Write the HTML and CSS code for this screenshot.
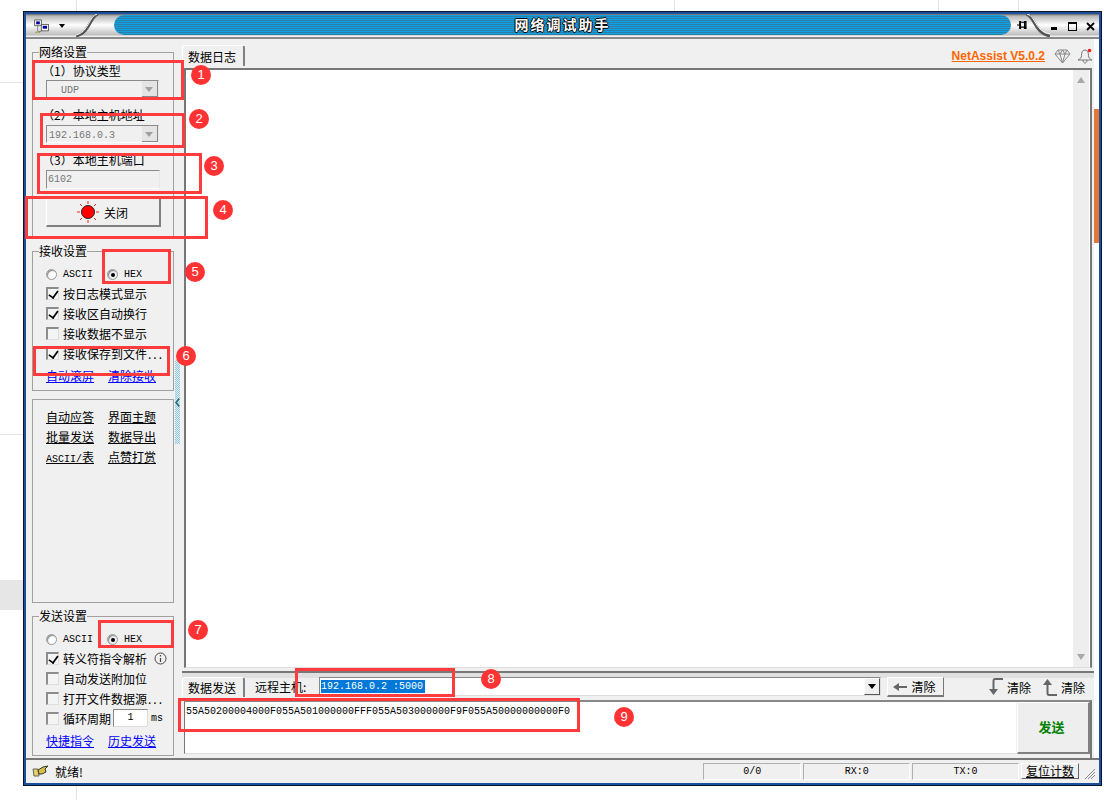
FILE: index.html
```html
<!DOCTYPE html>
<html lang="zh-CN">
<head>
  <meta charset="UTF-8" />
  <title>网络调试助手</title>
  <link rel="stylesheet" href="styles.css">
</head>
<body>
<div class="page">

  <div class="stray stray-h1"></div>
  <div class="stray stray-h2"></div>
  <div class="stray stray-box"></div>
  <div class="stray stray-v1"></div>
  <div class="stray stray-v2"></div>
  <div class="stray stray-v3"></div>
  <div class="stray stray-v4"></div>
  <div class="stray stray-v5"></div>

  <div class="window">

    <div class="titlebar">
      <div class="sys-menu">
        <svg width="16" height="15" viewBox="0 0 22 20">
          <rect x="1" y="1" width="9" height="8" fill="#fff" stroke="#333"/>
          <rect x="3" y="3" width="5" height="4" fill="#0000a0"/>
          <rect x="10" y="7" width="10" height="9" fill="#fff" stroke="#333"/>
          <rect x="12" y="9" width="6" height="4" fill="#0000a0"/>
          <path d="M5 9v8h5M2 18h6" fill="none" stroke="#666"/>
          <path d="M4 17h2v2h-2z" fill="#e8d000"/>
        </svg>
        <span class="caret"></span>
      </div>
      <svg class="swoosh" width="24" height="23" viewBox="0 0 24 23">
        <path d="M22 0C14 2 14 19 0 22" fill="none" stroke="#555" stroke-width="3"/>
        <path d="M21 0C13 2 13 18 0 21" fill="none" stroke="#fff" stroke-width="1"/>
      </svg>
      <div class="title-strip"><span class="title-text">网络调试助手</span></div>
      <svg class="pin" width="11" height="10" viewBox="0 0 16 14">
        <path d="M0 7h4M4 2h1v10h-1zM5 3h8M5 10h8M11 2h2v10h-2z" fill="none" stroke="#000" stroke-width="1.800"/>
      </svg>
      <svg class="swoosh swoosh-right" width="24" height="23" viewBox="0 0 24 23">
        <path d="M0 0C9 2 8 19 24 22" fill="none" stroke="#555" stroke-width="3"/>
        <path d="M1 0C10 2 9 18 24 20" fill="none" stroke="#fff" stroke-width="1"/>
      </svg>
      <div class="win-buttons">
        <span class="win-min"></span>
        <span class="win-max"></span>
        <svg width="9" height="9" viewBox="0 0 9 9"><path d="M1 1l7 7M8 1l-7 7" stroke="#000" stroke-width="1.800"/></svg>
      </div>
    </div>

    <div class="body">

      <div class="side">
        <fieldset class="group group-net">
          <legend>网络设置</legend>
          <div class="field-label">（1）协议类型</div>
          <div class="combo combo-disabled combo-udp">
            <span class="combo-text">UDP</span>
            <span class="combo-arrow"></span>
          </div>
          <div class="field-label field-gap">（2）本地主机地址</div>
          <div class="combo combo-disabled combo-low">
            <span class="combo-text">192.168.0.3</span>
            <span class="combo-arrow"></span>
          </div>
          <div class="field-label field-gap">（3）本地主机端口</div>
          <div class="port-input mono">6102</div>
          <div class="open-btn">
            <svg width="24" height="24" viewBox="0 0 24 24">
              <circle cx="12" cy="12" r="6.500" fill="#f00" stroke="#222" stroke-width="1"/>
              <path d="M12 1v3M12 20v3M1 12h3M20 12h3M4 4l2 2M18 18l2 2M20 4l-2 2M4 20l2-2" stroke="#f02020" stroke-width="1"/>
            </svg>
            <span>关闭</span>
          </div>
        </fieldset>

        <fieldset class="group group-recv">
          <legend>接收设置</legend>
          <div class="radio-row">
            <span class="radio"></span><span class="mono radio-text">ASCII</span>
            <span class="radio radio-on"></span><span class="mono radio-text">HEX</span>
          </div>
          <div class="check-row"><span class="check check-on"></span>按日志模式显示</div>
          <div class="check-row"><span class="check check-on"></span>接收区自动换行</div>
          <div class="check-row"><span class="check"></span>接收数据不显示</div>
          <div class="check-row"><span class="check check-on"></span>接收保存到文件<span class="dots">...</span></div>
          <div class="link-row link-row-recv"><a class="link">自动滚屏</a><a class="link">清除接收</a></div>
        </fieldset>

        <fieldset class="group group-tools">
          <div class="link-row"><a class="link-dark">自动应答</a><a class="link-dark">界面主题</a></div>
          <div class="link-row"><a class="link-dark">批量发送</a><a class="link-dark">数据导出</a></div>
          <div class="link-row"><a class="link-dark"><span class="mono">ASCII/</span>表</a><a class="link-dark">点赞打赏</a></div>
        </fieldset>

        <fieldset class="group group-send">
          <legend>发送设置</legend>
          <div class="radio-row">
            <span class="radio"></span><span class="mono radio-text">ASCII</span>
            <span class="radio radio-on"></span><span class="mono radio-text">HEX</span>
          </div>
          <div class="check-row">
            <span class="check check-on"></span>转义符指令解析
            <svg class="info" width="13" height="13" viewBox="0 0 13 13">
              <circle cx="6.500" cy="6.500" r="5.500" fill="none" stroke="#444"/>
              <path d="M6.500 3v1.500M6.500 6v4" stroke="#444" stroke-width="1.200"/>
            </svg>
          </div>
          <div class="check-row"><span class="check"></span>自动发送附加位</div>
          <div class="check-row"><span class="check"></span>打开文件数据源<span class="dots">...</span></div>
          <div class="check-row">
            <span class="check"></span>循环周期<span class="cycle-input mono">1</span><span class="mono cycle-unit">ms</span>
          </div>
          <div class="link-row link-row-send"><a class="link">快捷指令</a><a class="link">历史发送</a></div>
        </fieldset>
      </div>

      <div class="splitter">
        <div class="splitter-dots">
          <svg width="7" height="13" viewBox="0 0 7 13"><path d="M6 1L1.500 6.500 6 12" fill="none" stroke="#2a6a7a" stroke-width="2.200"/></svg>
        </div>
      </div>

      <div class="main">
        <div class="log-head">
          <div class="tab">数据日志</div>
          <a class="version">NetAssist V5.0.2</a>
          <svg class="gem" width="17" height="15" viewBox="0 0 17 15">
            <path d="M4 1h9l3 4-7.500 9L1 5zM1 5h15M6 5l2.500 9L11 5M4 1l2 4 2.500-4 2.500 4 2-4" fill="none" stroke="#888"/>
          </svg>
          <svg class="bell" width="17" height="16" viewBox="0 0 17 16">
            <path d="M8 2C5 2 4.500 5 4.500 7.500S3 11 1 12h14c-2-1-3.500-2-3.500-4.500S11 2 8 2zM6 12c0 4 4 4 4 0" fill="none" stroke="#777"/>
            <circle cx="12.500" cy="2.500" r="1.800" fill="#f02020"/>
          </svg>
        </div>

        <div class="log-box">
          <div class="log-text"></div>
          <div class="vscroll">
            <span class="tri-up"></span>
            <span class="tri-down"></span>
          </div>
        </div>

        <div class="send-bar">
          <div class="tab tab-send">数据发送</div>
          <span class="remote-label">远程主机:</span>
          <div class="remote-combo">
            <span class="remote-value mono">192.168.0.2 :5000</span>
            <span class="remote-arrow"></span>
          </div>
          <div class="clear-btn">
            <svg width="14" height="10" viewBox="0 0 14 10"><path d="M0 5l6-4v3h8v2H6v3z" fill="#666"/></svg>
            清除
          </div>
          <svg class="down-icon" width="16" height="18" viewBox="0 0 16 18">
            <path d="M15 1H7Q5.500 1 5.500 3v10" fill="none" stroke="#666" stroke-width="2"/>
            <path d="M1 11h9l-4.500 6z" fill="#666"/>
          </svg>
          <span class="bar-clear">清除</span>
          <svg class="up-icon" width="16" height="18" viewBox="0 0 16 18">
            <path d="M15 17H7Q5.500 17 5.500 15V5" fill="none" stroke="#666" stroke-width="2"/>
            <path d="M1 7h9L5.500 1z" fill="#666"/>
          </svg>
          <span class="bar-clear">清除</span>
        </div>

        <div class="send-row">
          <div class="send-box mono">55A50200004000F055A501000000FFF055A503000000F9F055A50000000000F0</div>
          <div class="send-btn">发送</div>
        </div>
      </div>

      <div class="edge"><div class="edge-thumb"></div></div>
    </div>

    <div class="statusbar">
      <svg class="status-icon" width="17" height="12" viewBox="0 0 17 12">
        <path d="M1 4h5l1 7H2z" fill="#e0d070" stroke="#665"/>
        <path d="M6 5l5-3 5-1-3 3 1 3-4 2H7z" fill="#d8c040" stroke="#333"/>
      </svg>
      <span class="status-text">就绪!</span>
      <span class="status-cell cell-count mono">0/0</span>
      <span class="status-cell cell-rx mono">RX:0</span>
      <span class="status-cell cell-tx mono">TX:0</span>
      <span class="reset-btn">复位计数</span>
      <svg class="grip" width="12" height="12" viewBox="0 0 12 12">
        <path d="M11 1L1 11M11 4L4 11M11 7L7 11" stroke="#888"/>
      </svg>
    </div>
  </div>

  <div class="mark mark-1"></div><span class="badge badge-1">1</span>
  <div class="mark mark-2"></div><span class="badge badge-2">2</span>
  <div class="mark mark-3"></div><span class="badge badge-3">3</span>
  <div class="mark mark-4"></div><span class="badge badge-4">4</span>
  <div class="mark mark-5"></div><span class="badge badge-5">5</span>
  <div class="mark mark-6"></div><span class="badge badge-6">6</span>
  <div class="mark mark-7"></div><span class="badge badge-7">7</span>
  <div class="mark mark-8"></div><span class="badge badge-8">8</span>
  <div class="mark mark-9"></div><span class="badge badge-9">9</span>
</div>
</body>
</html>
```

FILE: styles.css
```css
* {
  box-sizing: border-box;
}
body {
  margin: 0;
  background: #fff;
  font-family: "Noto Sans CJK SC", "Liberation Sans", sans-serif;
  font-size: 12px;
  color: #000;
}
.page {
  position: relative;
  width: 1104px;
  height: 800px;
  overflow: hidden;
  padding: 11px 0 0 23px;
}
.mono {
  font-family: "Liberation Mono", "Noto Sans CJK SC", monospace;
  font-size: 10px;
}

/* leftovers of the page behind the window */
.stray {
  position: absolute;
  background: #e4e4e4;
}
.stray-h1 { left: 0; top: 82px; width: 23px; height: 1px; }
.stray-h2 { left: 0; top: 434px; width: 23px; height: 1px; }
.stray-box { left: 0; top: 580px; width: 23px; height: 30px; background: #e6e6e6; }
.stray-v1 { left: 76px; top: 0; width: 1px; height: 11px; }
.stray-v2 { left: 674px; top: 0; width: 1px; height: 11px; }
.stray-v3 { left: 938px; top: 0; width: 1px; height: 11px; }
.stray-v4 { left: 1018px; top: 0; width: 1px; height: 11px; }
.stray-v5 { left: 76px; top: 786px; width: 1px; height: 14px; }

/* window frame */
.window {
  width: 1079px;
  height: 775px;
  border: 1px solid #0a1428;
  padding: 2px;
  box-shadow: inset 0 0 0 2px #1c4f9c;
  background: #f0f0f0;
  display: flex;
  flex-direction: column;
}
.titlebar {
  height: 25px;
  display: flex;
  align-items: flex-start;
  background: linear-gradient(#666 0, #b8b8b8 2px, #fff 11px, #bdbdbd 21px, #f0f0f0 22px);
  border-bottom: 2px solid #8a8a8a;
  flex-shrink: 0;
}
.sys-menu {
  width: 50px;
  height: 22px;
  padding: 2px 0 0 8px;
  display: flex;
  gap: 9px;
  align-items: center;
}
.caret {
  border: 3px solid transparent;
  border-top: 4px solid #000;
  border-bottom: 0;
}
.swoosh {
  flex-shrink: 0;
}
.swoosh-right {
  margin-left: -2px;
}
.title-strip {
  width: 897px;
  height: 20px;
  margin: 1px 0 0 14px;
  border-radius: 10px;
  background: repeating-linear-gradient(#10a0e6 0 1px, #2a80a8 1px 2px);
  text-align: center;
}
.title-text {
  position: relative;
  top: -1px;
  font-size: 14px;
  line-height: 20px;
  font-weight: bold;
  letter-spacing: 2px;
  color: #fff;
  text-shadow: 1px 0 #000, -1px 0 #000, 0 1px #000, 0 -1px #000;
}
.pin {
  margin: 6px 0 0 6px;
}
.win-buttons {
  display: flex;
  align-items: center;
  height: 22px;
  margin-left: 1px;
  padding-top: 3px;
}
.win-min {
  width: 6px;
  height: 3px;
  background: #000;
  margin-top: 3px;
}
.win-max {
  width: 9px;
  height: 9px;
  margin-left: 11px;
  border: 1px solid #000;
  border-top-width: 2px;
}
.win-buttons svg {
  margin-left: 9px;
}

.body {
  flex: 1;
  display: flex;
  min-height: 0;
}

/* left column */
.side {
  width: 149px;
  padding: 6px 0 0 6px;
  flex-shrink: 0;
}
.group {
  margin: 0;
  padding: 0 0 0 13px;
  width: 142px;
  border: 1px solid #a0a0a0;
}
.group legend {
  padding: 0;
  margin-left: -7px;
  line-height: 14px;
  height: 14px;
}
.group-net { height: 194px; padding-top: 4px; }
.group-recv { height: 147px; margin-top: 5px; padding-top: 7px; }
.group-tools { height: 204px; margin-top: 8px; padding-top: 6px; }
.group-send { height: 147px; margin-top: 6px; padding-top: 7px; }

.field-label {
  height: 16px;
  line-height: 16px;
  margin-left: -4px;
  white-space: nowrap;
}
.field-gap {
  margin-top: 9px;
}
.combo {
  width: 113px;
  height: 18px;
  margin-top: 1px;
  border: 1px solid #8c8c8c;
  border-right-color: #e8e8e8;
  border-bottom-color: #fff;
  display: flex;
  justify-content: space-between;
  background: #f0f0f0;
}
.combo-low {
  margin-top: 2px;
}
.combo-text {
  font-family: "Liberation Mono", monospace;
  font-size: 10px;
  line-height: 19px;
  color: #777;
  padding-left: 2px;
}
.combo-udp .combo-text {
  padding-left: 14px;
}
.combo-arrow {
  width: 16px;
  height: 16px;
  background: #e4e4e4;
  border-right: 1px solid #888;
  border-bottom: 1px solid #888;
  position: relative;
}
.combo-arrow::after {
  content: "";
  position: absolute;
  left: 3px;
  top: 6px;
  border: 4px solid transparent;
  border-top: 5px solid #a0a0a0;
  border-bottom: 0;
}
.port-input {
  width: 114px;
  height: 19px;
  margin-top: 2px;
  border: 1px solid #8c8c8c;
  border-right-color: #e8e8e8;
  border-bottom-color: #fff;
  line-height: 17px;
  padding-left: 1px;
  color: #777;
}
.open-btn {
  width: 115px;
  height: 29px;
  margin-top: 9px;
  padding-right: 2px;
  background: #f0f0f0;
  border: 1px solid #fff;
  border-right: 2px solid #808080;
  border-bottom: 2px solid #808080;
  display: flex;
  align-items: center;
  justify-content: center;
  gap: 4px;
}

.radio-row {
  height: 18px;
  display: flex;
  align-items: center;
}
.radio {
  width: 11px;
  height: 11px;
  border-radius: 50%;
  border: 1px solid #999;
  background: #fff;
  box-shadow: inset 1px 1px 1px #888;
  flex-shrink: 0;
  position: relative;
}
.radio-on {
  background: #f0f0f0;
  margin-left: 14px;
}
.radio-on::after {
  content: "";
  position: absolute;
  left: 3px;
  top: 3px;
  width: 4px;
  height: 4px;
  border-radius: 50%;
  background: #000;
}
.radio-text {
  margin-left: 6px;
  width: 30px;
}
.radio-on + .radio-text {
  width: 20px;
}
.check-row {
  height: 20px;
  display: flex;
  align-items: center;
  white-space: nowrap;
}
.check {
  width: 13px;
  height: 13px;
  margin-right: 4px;
  background: #f4f4f4;
  border: 2px solid #8c8c8c;
  border-right: 1px solid #ddd;
  border-bottom: 1px solid #ddd;
  position: relative;
  flex-shrink: 0;
}
.check-on::after {
  content: "";
  position: absolute;
  left: 2px;
  top: -1px;
  width: 5px;
  height: 9px;
  border-right: 2px solid #000;
  border-bottom: 2px solid #000;
  transform: rotate(35deg) scale(0.85);
}
.dots {
  letter-spacing: 2px;
  margin-left: 1px;
}
.info {
  margin-left: 7px;
}
.cycle-input {
  width: 35px;
  height: 18px;
  margin-left: 2px;
  border: 1px solid #888;
  border-right-color: #ddd;
  border-bottom-color: #ddd;
  background: #fff;
  text-align: center;
  line-height: 16px;
}
.cycle-unit {
  margin-left: 3px;
}
.link-row {
  height: 20px;
  display: flex;
  gap: 14px;
  align-items: center;
  white-space: nowrap;
}
.link-row-recv { margin-top: 2px; }
.link-row-send { margin-top: 2px; }
.link {
  color: #0000ff;
  text-decoration: underline;
  cursor: pointer;
}
.link-dark {
  width: 48px;
  color: #000;
  text-decoration: underline;
  cursor: pointer;
}

.splitter {
  width: 7px;
  padding-top: 321px;
  flex-shrink: 0;
}
.splitter-dots {
  width: 5px;
  height: 84px;
  background: repeating-conic-gradient(#9cc8dc 0 25%, #d4ecf4 0 50%) 0 0 / 2px 2px;
  display: flex;
  align-items: center;
  justify-content: center;
}

/* right column */
.main {
  width: 912px;
  flex-shrink: 0;
  display: flex;
  flex-direction: column;
}
.log-head {
  height: 29px;
  display: flex;
  align-items: flex-start;
  padding-top: 6px;
}
.tab {
  width: 63px;
  height: 21px;
  line-height: 21px;
  padding-right: 2px;
  text-align: center;
  background: #f0f0f0;
  border-top: 1px solid #fff;
  border-left: 1px solid #fff;
  border-right: 2px solid #808080;
  border-radius: 3px 3px 0 0;
  white-space: nowrap;
}
.version {
  margin-left: auto;
  margin-top: 4px;
  font-family: "Liberation Sans", sans-serif;
  font-size: 12px;
  font-weight: bold;
  line-height: 14px;
  color: #ff6600;
  text-decoration: underline;
  cursor: pointer;
}
.gem {
  margin: 4px 0 0 9px;
}
.bell {
  margin: 3px 0 0 6px;
}
.log-box {
  height: 600px;
  margin-left: 2px;
  margin-right: 2px;
  display: flex;
  border-top: 2px solid #777;
  border-left: 2px solid #777;
  border-right: 2px solid #777;
  border-bottom: 1px solid #ddd;
}
.log-text {
  flex: 1;
  background: #fff;
}
.vscroll {
  width: 17px;
  background: #eee;
  display: flex;
  flex-direction: column;
  justify-content: space-between;
  align-items: center;
  padding: 7px 0;
  border-right: 1px solid #fff;
}
.tri-up {
  border: 4px solid transparent;
  border-bottom: 6px solid #a8a8a8;
  border-top: 0;
}
.tri-down {
  border: 4px solid transparent;
  border-top: 6px solid #a8a8a8;
  border-bottom: 0;
}
.send-bar {
  height: 26px;
  margin-top: 3px;
  border-top: 2px solid #777;
  background: linear-gradient(#e0e0e0 0 5px, #f0f0f0 5px);
  display: flex;
  align-items: flex-start;
  flex-shrink: 0;
}
.tab-send {
  margin-top: 4px;
  height: 20px;
  line-height: 19px;
}
.remote-label {
  margin: 4px 0 0 10px;
  width: 64px;
  line-height: 19px;
}
.remote-combo {
  width: 562px;
  height: 19px;
  margin-top: 4px;
  background: #fff;
  border: 1px solid #888;
  border-right-color: #ddd;
  border-bottom-color: #ddd;
  display: flex;
  justify-content: space-between;
  align-items: center;
  padding-left: 1px;
}
.remote-value {
  background: #0078d7;
  color: #fff;
  line-height: 13px;
  height: 13px;
  width: 104px;
  white-space: nowrap;
}
.remote-arrow {
  width: 16px;
  height: 17px;
  background: #f0f0f0;
  border-right: 1px solid #555;
  border-bottom: 1px solid #555;
  border-top: 1px solid #fff;
  border-left: 1px solid #fff;
  position: relative;
}
.remote-arrow::after {
  content: "";
  position: absolute;
  left: 3px;
  top: 5px;
  border: 4px solid transparent;
  border-top: 5px solid #000;
  border-bottom: 0;
}
.clear-btn {
  width: 57px;
  height: 20px;
  margin: 4px 0 0 6px;
  padding-right: 2px;
  border: 1px solid #fff;
  border-right: 1px solid #777;
  border-bottom: 2px solid #777;
  display: flex;
  align-items: center;
  justify-content: center;
  gap: 4px;
}
.down-icon {
  margin: 5px 0 0 44px;
}
.up-icon {
  margin: 5px 0 0 11px;
}
.bar-clear {
  margin: 6px 0 0 3px;
  line-height: 18px;
}
.send-row {
  flex: 1;
  display: flex;
  gap: 1px;
  margin: 3px 2px 0 2px;
  padding-bottom: 4px;
  border-top: 2px solid #888;
  border-right: 2px solid #777;
}
.send-box {
  width: 832px;
  background: #fff;
  border-left: 1px solid #777;
  border-bottom: 1px solid #ddd;
  padding: 4px 0 0 1px;
  white-space: nowrap;
}
.send-btn {
  width: 73px;
  padding: 0 3px 3px 0;
  background: #eee;
  border: 1px solid #fff;
  border-right: 2px solid #808080;
  border-bottom: 2px solid #808080;
  color: #008000;
  font-weight: bold;
  font-size: 13px;
  display: flex;
  align-items: center;
  justify-content: center;
}
.edge {
  width: 5px;
  background: #fff;
  padding-top: 70px;
}
.edge-thumb {
  height: 134px;
  background: #e0783a;
}

/* status bar */
.statusbar {
  height: 25px;
  flex-shrink: 0;
  border-top: 2px solid #777;
  display: flex;
  align-items: center;
  padding: 0 3px 1px 6px;
}
.status-icon {
  flex-shrink: 0;
}
.status-text {
  margin-left: 6px;
  width: 649px;
}
.status-cell {
  height: 17px;
  line-height: 15px;
  text-align: center;
  border: 1px solid #b0b0b0;
  border-right-color: #fff;
  border-bottom-color: #fff;
  margin-right: 2px;
}
.cell-count { width: 98px; }
.cell-rx { width: 107px; }
.cell-tx { width: 107px; }
.reset-btn {
  width: 58px;
  height: 16px;
  line-height: 14px;
  text-align: center;
  border: 1px solid #fff;
  border-right: 1px solid #666;
  border-bottom: 1px solid #666;
  text-decoration: underline;
}
.grip {
  margin: 6px 0 0 5px;
}

/* red annotations drawn over the screenshot */
.mark {
  position: absolute;
  border: 3px solid #ff3b3b;
}
.mark-1 { left: 32px; top: 60px; width: 152px; height: 40px; }
.mark-2 { left: 40px; top: 113px; width: 145px; height: 35px; }
.mark-3 { left: 37px; top: 153px; width: 165px; height: 41px; }
.mark-4 { left: 25px; top: 196px; width: 183px; height: 43px; }
.mark-5 { left: 102px; top: 249px; width: 69px; height: 35px; }
.mark-6 { left: 33px; top: 346px; width: 137px; height: 30px; }
.mark-7 { left: 98px; top: 620px; width: 76px; height: 28px; }
.mark-8 { left: 295px; top: 668px; width: 160px; height: 29px; }
.mark-9 { left: 178px; top: 698px; width: 402px; height: 34px; }
.badge {
  position: absolute;
  width: 20px;
  height: 20px;
  border-radius: 50%;
  background: #ff3333;
  color: #fff;
  font-family: "Liberation Sans", sans-serif;
  font-size: 13px;
  line-height: 20px;
  text-align: center;
}
.badge-1 { left: 191px; top: 65px; }
.badge-2 { left: 189px; top: 109px; }
.badge-3 { left: 204px; top: 156px; }
.badge-4 { left: 213px; top: 200px; }
.badge-5 { left: 185px; top: 262px; }
.badge-6 { left: 176px; top: 346px; }
.badge-7 { left: 188px; top: 620px; }
.badge-8 { left: 481px; top: 669px; }
.badge-9 { left: 614px; top: 707px; }
```
